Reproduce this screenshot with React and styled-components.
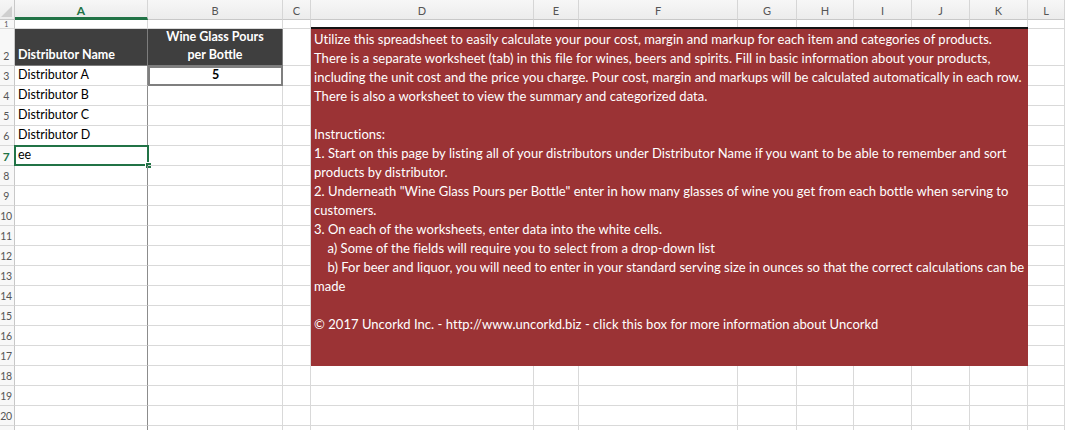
import React from 'react';
import styled, {createGlobalStyle, css} from 'styled-components';

const GlobalStyle = createGlobalStyle`
  html, body {
    margin: 0;
    padding: 0;
    background: #fff;
    overflow: hidden;
  }
  body {
    font-family: Lato, "Open Sans", "Liberation Sans", sans-serif;
  }
`;

const GRID = '#d9d9d9';
const GREEN = '#217346';

const columns = [
  {key: 'A', w: 133},
  {key: 'B', w: 135},
  {key: 'C', w: 28},
  {key: 'D', w: 223},
  {key: 'E', w: 45},
  {key: 'F', w: 159},
  {key: 'G', w: 59},
  {key: 'H', w: 57},
  {key: 'I', w: 58},
  {key: 'J', w: 58},
  {key: 'K', w: 58},
  {key: 'L', w: null}
];

// row 21 only peeks in at the bottom edge, so its number isn't drawn
const LAST_VISIBLE = 20;
const rowHeight = n => (n === 1 ? 9 : n === 2 ? 37 : 20);
const rows = Array.from({length: 21}, (_, i) => i + 1);

const cells = {
  A2: {text: 'Distributor Name', dark: true, bold: true},
  B2: {text: 'Wine Glass Pours\nper Bottle', dark: true, bold: true, center: true},
  A3: {text: 'Distributor A'},
  A4: {text: 'Distributor B'},
  A5: {text: 'Distributor C'},
  A6: {text: 'Distributor D'},
  A7: {text: 'ee', selected: true},
  B3: {text: '5', bold: true, center: true, boxed: true}
};

const noteLines = [
  'Utilize this spreadsheet to easily calculate your pour cost, margin and markup for each item and categories of products.',
  'There is a separate worksheet (tab) in this file for wines, beers and spirits. Fill in basic information about your products,',
  'including the unit cost and the price you charge. Pour cost, margin and markups will be calculated automatically in each row.',
  'There is also a worksheet to view the summary and categorized data.',
  '',
  'Instructions:',
  '1. Start on this page by listing all of your distributors under Distributor Name if you want to be able to remember and sort',
  'products by distributor.',
  '2. Underneath "Wine Glass Pours per Bottle" enter in how many glasses of wine you get from each bottle when serving to',
  'customers.',
  '3. On each of the worksheets, enter data into the white cells.',
  '    a) Some of the fields will require you to select from a drop-down list',
  '    b) For beer and liquor, you will need to enter in your standard serving size in ounces so that the correct calculations can be',
  'made',
  '',
  '\u00a9 2017 Uncorkd Inc. - http://www.uncorkd.biz - click this box for more information about Uncorkd'
];

const Sheet = styled.div`
  position: relative;
  display: grid;
  grid-template-columns: 15px ${columns.map(c => (c.w ? c.w + 'px' : '1fr')).join(' ')};
  grid-template-rows: 20px ${rows.map(r => rowHeight(r) + 'px').join(' ')};
  width: 1065px;
  height: 430px;
  overflow: hidden;
  font-size: 12.5px;
  color: #000;
`;

const Corner = styled.div`
  position: relative;
  background: linear-gradient(#f6f6f6, #ececec);
  border-right: 1px solid #c8c8c8;
  border-bottom: 1px solid #c8c8c8;
  box-sizing: border-box;

  &::after {
    content: '';
    position: absolute;
    right: 2px;
    bottom: 2px;
    border-style: solid;
    border-width: 0 0 11px 11px;
    border-color: transparent transparent #cfcfcf transparent;
  }
`;

const ColHeader = styled.div`
  display: flex;
  align-items: center;
  justify-content: center;
  box-sizing: border-box;
  background: linear-gradient(#f7f7f7, #ececec);
  border-right: 1px solid #d6d6d6;
  border-bottom: 1px solid #c8c8c8;
  font-size: 11px;
  color: #555;
  padding-top: 1px;

  ${p => p.$active && css`
    color: ${GREEN};
    font-weight: 700;
    font-size: 12px;
    border-bottom: 3px solid ${GREEN};
    padding-top: 3px;
  `}
`;

const RowHeader = styled.div`
  box-sizing: border-box;
  background: #f8f8f8;
  border-right: 1px solid #c8c8c8;
  border-bottom: 1px solid ${GRID};
  font-size: 10.5px;
  letter-spacing: -0.4px;
  color: #555;
  padding: 0 3px 2px 1px;
  display: flex;
  align-items: flex-end;
  justify-content: center;
  line-height: 13px;

  ${p => p.$short && css`
    font-size: 7px;
    line-height: 8px;
    padding: 0 3px 0 1px;
  `}

  ${p => p.$active && css`
    color: ${GREEN};
    font-weight: 700;
    font-size: 12px;
  `}
`;

const Cell = styled.div`
  position: relative;
  box-sizing: border-box;
  border-right: 1px solid ${p => (p.$strongRight ? '#8c8c8c' : GRID)};
  border-bottom: 1px solid ${GRID};
  display: flex;
  align-items: flex-end;
  justify-content: ${p => (p.$center ? 'center' : 'flex-start')};
  text-align: ${p => (p.$center ? 'center' : 'left')};
  padding: 0 3px 1px;
  white-space: pre;
  line-height: 18px;
  font-weight: ${p => (p.$bold ? 700 : 400)};

  ${p => p.$dark && css`
    background: #3f3f3f;
    color: #fff;
    border-right-color: #7d7d7d;
    border-bottom-color: #7d7d7d;
    padding-bottom: 1px;
  `}

  ${p => p.$boxed && css`
    border: 2px solid #7f7f7f;
    padding-bottom: 0;
  `}

  ${p => p.$selected && css`
    &::before {
      content: '';
      position: absolute;
      left: -1px;
      top: -1px;
      right: -2px;
      bottom: -1px;
      border: 2px solid ${GREEN};
      pointer-events: none;
    }
    &::after {
      content: '';
      position: absolute;
      right: -5px;
      bottom: -4px;
      width: 5px;
      height: 5px;
      background: ${GREEN};
      border: 1px solid #fff;
    }
  `}
`;

const NoteBox = styled.div`
  position: absolute;
  left: 311px;
  top: 27px;
  width: 717px;
  height: 339px;
  box-sizing: border-box;
  background: #9b3335;
  border-top: 2px solid #141414;
  color: #fff;
  font-size: 13px;
  letter-spacing: 0.04px;
  line-height: 19px;
  padding: 1px 0 0 3px;
  cursor: pointer;
`;

const NoteLine = styled.div`
  white-space: pre;
  height: 19px;
`;

export default function App() {
  return (
    <>
      <GlobalStyle />
      <Sheet>
        <Corner />
        {columns.map(c => (
          <ColHeader key={c.key} $active={c.key === 'A'}>{c.key}</ColHeader>
        ))}
        {rows.map(r => (
          <React.Fragment key={r}>
            <RowHeader $active={r === 7} $short={r === 1}>
              {r <= LAST_VISIBLE ? r : ''}
            </RowHeader>
            {columns.map(c => {
              const cell = cells[c.key + r] || {};
              return (
                <Cell
                  key={c.key}
                  $dark={cell.dark}
                  $bold={cell.bold}
                  $center={cell.center}
                  $boxed={cell.boxed}
                  $selected={cell.selected}
                  $strongRight={c.key === 'A' && r >= 3}
                >
                  {cell.text}
                </Cell>
              );
            })}
          </React.Fragment>
        ))}
        <NoteBox>
          {noteLines.map((line, i) => (
            <NoteLine key={i}>{line}</NoteLine>
          ))}
        </NoteBox>
      </Sheet>
    </>
  );
}
